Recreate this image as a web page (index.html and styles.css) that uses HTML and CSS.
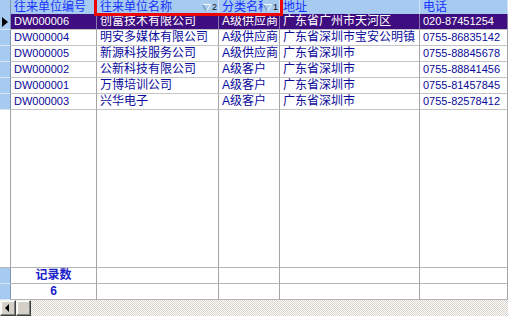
FILE: index.html
```html
<!DOCTYPE html>
<html lang="zh">
<head>
<meta charset="utf-8">
<title>往来单位</title>
<link rel="stylesheet" href="styles.css">
</head>
<body>
<div class="grid">
  <div class="row head">
    <div class="ind"></div>
    <div class="cell">往来单位编号</div>
    <div class="cell sort"><span class="t">往来单位名称</span><span class="si"><svg width="9" height="9" viewBox="0 0 9 9"><path d="M0.5 1.5L4.5 8.5" stroke="#5f7fa8" fill="none"/><path d="M0.5 1.5H8.5L4.5 8.5" stroke="#f4f8fc" fill="none"/></svg><span class="sn">2</span></span></div>
    <div class="cell sort"><span class="t">分类名称</span><span class="si"><svg width="9" height="9" viewBox="0 0 9 9"><path d="M0.5 1.5L4.5 8.5" stroke="#5f7fa8" fill="none"/><path d="M0.5 1.5H8.5L4.5 8.5" stroke="#f4f8fc" fill="none"/></svg><span class="sn">1</span></span></div>
    <div class="cell">地址</div>
    <div class="cell">电话</div>
  </div>

  <div class="row sel">
    <div class="ind"><span class="arrow"></span></div>
    <div class="cell num">DW000006</div>
    <div class="cell">创富技术有限公司</div>
    <div class="cell">A级供应商</div>
    <div class="cell">广东省广州市天河区</div>
    <div class="cell num">020-87451254</div>
  </div>
  <div class="row">
    <div class="ind"></div>
    <div class="cell num">DW000004</div>
    <div class="cell">明安多媒体有限公司</div>
    <div class="cell">A级供应商</div>
    <div class="cell">广东省深圳市宝安公明镇</div>
    <div class="cell num">0755-86835142</div>
  </div>
  <div class="row">
    <div class="ind"></div>
    <div class="cell num">DW000005</div>
    <div class="cell">新源科技服务公司</div>
    <div class="cell">A级供应商</div>
    <div class="cell">广东省深圳市</div>
    <div class="cell num">0755-88845678</div>
  </div>
  <div class="row">
    <div class="ind"></div>
    <div class="cell num">DW000002</div>
    <div class="cell">公新科技有限公司</div>
    <div class="cell">A级客户</div>
    <div class="cell">广东省深圳市</div>
    <div class="cell num">0755-88841456</div>
  </div>
  <div class="row">
    <div class="ind"></div>
    <div class="cell num">DW000001</div>
    <div class="cell">万博培训公司</div>
    <div class="cell">A级客户</div>
    <div class="cell">广东省深圳市</div>
    <div class="cell num">0755-81457845</div>
  </div>
  <div class="row">
    <div class="ind"></div>
    <div class="cell num">DW000003</div>
    <div class="cell">兴华电子</div>
    <div class="cell">A级客户</div>
    <div class="cell">广东省深圳市</div>
    <div class="cell num">0755-82578412</div>
  </div>

  <div class="row filler">
    <div class="ind"></div>
    <div class="cell"></div>
    <div class="cell"></div>
    <div class="cell"></div>
    <div class="cell"></div>
    <div class="cell"></div>
  </div>

  <div class="row foot">
    <div class="ind"></div>
    <div class="cell total">记录数</div>
    <div class="cell"></div>
    <div class="cell"></div>
    <div class="cell"></div>
    <div class="cell"></div>
  </div>
  <div class="row foot">
    <div class="ind"></div>
    <div class="cell total">6</div>
    <div class="cell"></div>
    <div class="cell"></div>
    <div class="cell"></div>
    <div class="cell"></div>
  </div>

  <div class="scroll">
    <div class="btn"><span class="larrow"></span></div>
    <div class="thumb"></div>
    <div class="track"></div>
  </div>

  <div class="redbox"></div>
</div>
</body>
</html>
```

FILE: styles.css
```css
* { box-sizing: border-box; }
html, body { margin: 0; padding: 0; }
body {
  width: 508px;
  height: 316px;
  overflow: hidden;
  background: #ffffff;
  font-family: "Liberation Sans", "Noto Sans CJK SC", sans-serif;
}
.grid {
  position: relative;
  display: flex;
  flex-direction: column;
  height: 316px;
}
.row {
  display: grid;
  grid-template-columns: 11px 86px 122px 61px 140px 88px;
  height: 16px;
  flex: none;
}
.cell {
  border-right: 1px solid #a4a4a4;
  border-bottom: 1px solid #c4c4c4;
  padding-left: 3px;
  font-size: 12px;
  line-height: 15px;
  color: #0a0a9c;
  white-space: nowrap;
  overflow: hidden;
}
.cell.num { font-size: 11px; }
.ind {
  background: #a6caf0;
  border-right: 1px solid #7f93ad;
  border-bottom: 1px solid #d6e4f3;
  position: relative;
}
.head { height: 14px; background: #a6caf0; }
.head .cell {
  border-bottom: none;
  border-right: 1px solid #d2e2f4;
  color: #1432ff;
  line-height: 14px;
}
.head .ind { border-bottom: none; }
.sort { display: flex; align-items: center; padding-right: 1px; }
.sort .t { flex: 1; overflow: hidden; }
.si { flex: none; display: flex; align-items: center; }
.si svg { display: block; }
.sn { font-size: 9px; line-height: 9px; color: #111111; margin-left: 1px; width: 5px; }
.sel .cell { background: #3e0d80; color: #ffffff; border-right-color: #8a78b0; }
.arrow {
  position: absolute;
  left: 2px;
  top: 3px;
  width: 0;
  height: 0;
  border-left: 6px solid #000000;
  border-top: 5px solid transparent;
  border-bottom: 5px solid transparent;
}
.filler { flex: 1; height: auto; }
.filler .cell { border-bottom: 1px solid #b4b4b4; }
.filler .ind { background: #ffffff; border-bottom: 1px solid #b4b4b4; border-right-color: #a4a4a4; }
.foot .cell { border-bottom: 1px solid #b4b4b4; }
.total {
  text-align: center;
  padding-left: 0;
  font-weight: bold;
  color: #1a22c8;
}
.scroll {
  height: 16px;
  flex: none;
  display: flex;
}
.btn, .thumb {
  width: 16px;
  height: 16px;
  background: #d4d0c8;
  border: 1px solid;
  border-color: #f4f4f0 #404040 #404040 #f4f4f0;
  box-shadow: inset -1px -1px 0 #808080, inset 1px 1px 0 #ffffff;
  position: relative;
  flex: none;
}
.thumb { width: 15px; }
.larrow {
  position: absolute;
  left: 4px;
  top: 3px;
  width: 0;
  height: 0;
  border-right: 4px solid #000000;
  border-top: 4px solid transparent;
  border-bottom: 4px solid transparent;
}
.track {
  flex: 1;
  background: repeating-conic-gradient(#d4d0c8 0 25%, #ffffff 0 50%) 0 0 / 2px 2px;
}
.redbox {
  position: absolute;
  left: 94px;
  top: -3px;
  width: 189px;
  height: 19px;
  border: 3px solid #ec0606;
}
```
